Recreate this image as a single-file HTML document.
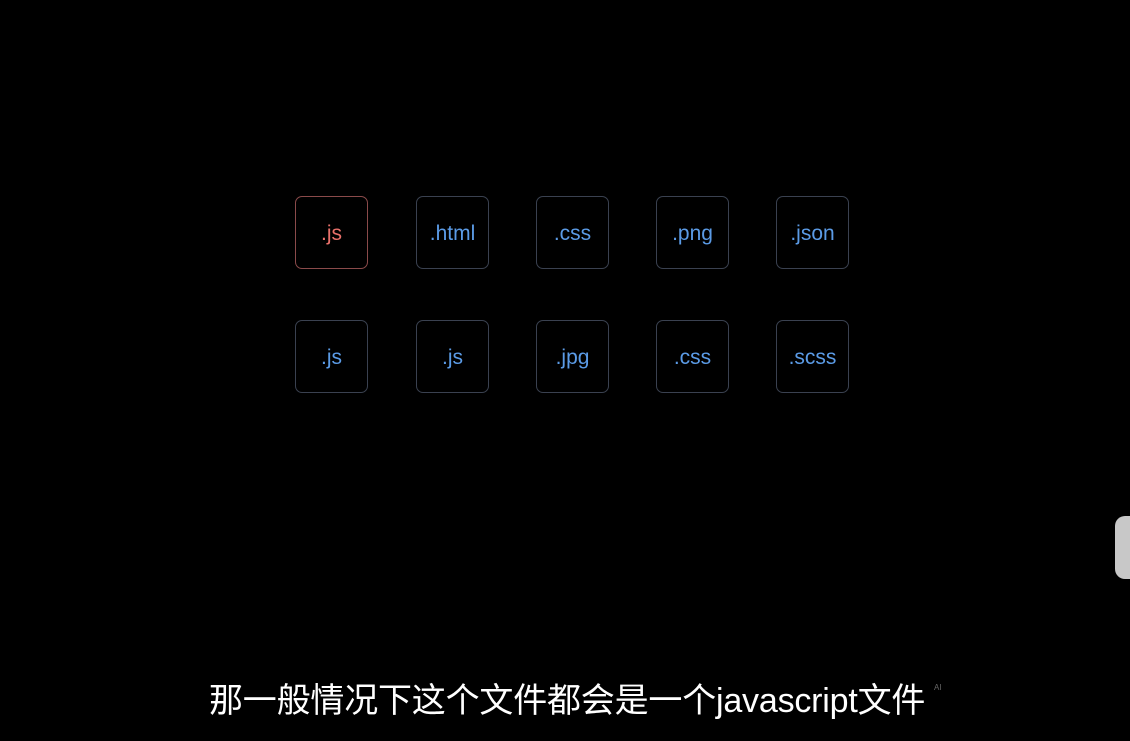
<!DOCTYPE html>
<html><head><meta charset="utf-8"><style>
html,body{margin:0;padding:0;background:#000;width:1130px;height:741px;overflow:hidden;position:relative}
.b{position:absolute;width:73px;height:73px;border:1.5px solid #3a4150;border-radius:7px;box-sizing:border-box;color:#5b9be6;font:21px "Liberation Sans",sans-serif;display:flex;align-items:center;justify-content:center;padding-top:3px}
.r{border-color:#8a4a4a;color:#e8706a}
.sub{position:absolute;left:209px;top:673px;color:#fff;font:34px "Liberation Sans","Noto Sans CJK SC",sans-serif;white-space:nowrap;letter-spacing:-0.2px}
.ai{position:absolute;left:934px;top:683px;color:#666;font:8px "Liberation Sans",sans-serif}
.tab{position:absolute;left:1115px;top:516px;width:30px;height:63px;background:#c8c8c8;border-radius:10px}
</style></head><body>
<div class="b r" style="left:295px;top:196px">.js</div>
<div class="b" style="left:416px;top:196px">.html</div>
<div class="b" style="left:536px;top:196px">.css</div>
<div class="b" style="left:656px;top:196px">.png</div>
<div class="b" style="left:776px;top:196px">.json</div>
<div class="b" style="left:295px;top:320px">.js</div>
<div class="b" style="left:416px;top:320px">.js</div>
<div class="b" style="left:536px;top:320px">.jpg</div>
<div class="b" style="left:656px;top:320px">.css</div>
<div class="b" style="left:776px;top:320px">.scss</div>
<div class="sub">那一般情况下这个文件都会是一个javascript文件</div>
<div class="ai">AI</div>
<div class="tab"></div>
</body></html>
